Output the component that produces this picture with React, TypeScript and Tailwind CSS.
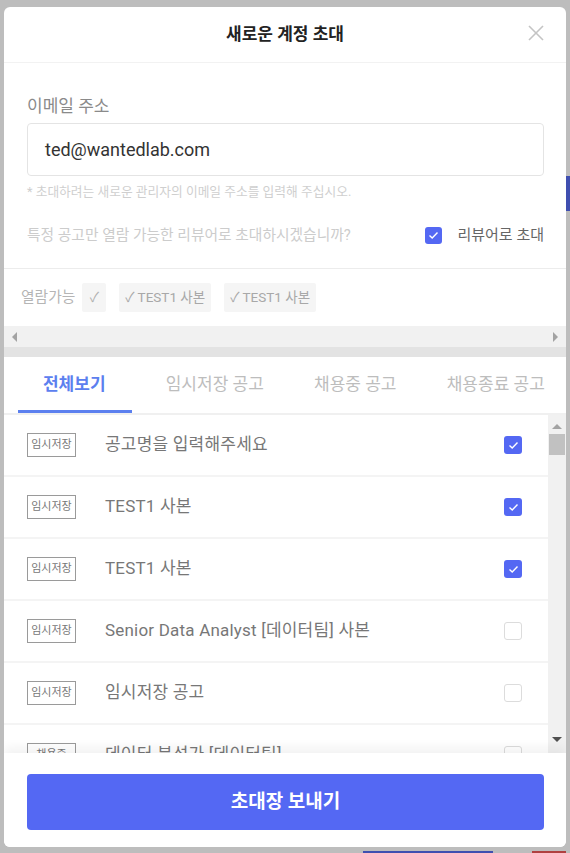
import React from "react";

const rows = [
  { badge: "임시저장", title: "공고명을 입력해주세요", checked: true },
  { badge: "임시저장", title: "TEST1 사본", checked: true },
  { badge: "임시저장", title: "TEST1 사본", checked: true },
  { badge: "임시저장", title: "Senior Data Analyst [데이터팀] 사본", checked: false },
  { badge: "임시저장", title: "임시저장 공고", checked: false },
  { badge: "채용중", title: "데이터 분석가 [데이터팀]", checked: false },
  { badge: "채용중", title: "TEST1", checked: false },
];

const tabs = ["전체보기", "임시저장 공고", "채용중 공고", "채용종료 공고"];

function CheckBox({ checked, size = "w-[18px] h-[18px]" }: { checked: boolean; size?: string }) {
  if (checked) {
    return (
      <span className={`${size} shrink-0 rounded-[3px] bg-[#5468f3] flex items-center justify-center`}>
        <svg width="11" height="9" viewBox="0 0 11 9" fill="none">
          <polyline points="1.5,4.5 4.2,7 9.5,1.5" stroke="white" strokeWidth="1.4" />
        </svg>
      </span>
    );
  }
  return <span className={`${size} shrink-0 rounded-[3px] border border-[#dcdcdc] bg-white`} />;
}

function Triangle({ dir, color }: { dir: "up" | "down" | "left" | "right"; color: string }) {
  const pts = {
    up: "0,6 5,1 10,6",
    down: "0,1 5,6 10,1",
    left: "6,0 1,5 6,10",
    right: "1,0 6,5 1,10",
  }[dir];
  const w = dir === "up" || dir === "down" ? 10 : 7;
  const h = dir === "up" || dir === "down" ? 7 : 10;
  return (
    <svg width={w} height={h} viewBox={`0 0 ${w} ${h}`}>
      <polygon points={pts} fill={color} />
    </svg>
  );
}

export default function App() {
  return (
    <div className="relative w-[570px] h-[853px] overflow-hidden bg-[#bdbdbd] pt-[7px] font-['Roboto','Noto_Sans_CJK_KR',sans-serif]">
      {/* page remnants behind the dimmed backdrop */}
      <div className="absolute right-0 top-[176px] w-[4px] h-[35px] bg-[#3f4fb0]" />
      <div className="absolute left-[363px] bottom-0 w-[130px] h-[2px] bg-[#3f4fb0]" />
      <div className="absolute left-[532px] bottom-0 w-[34px] h-[2px] bg-[#b04040]" />

      <div className="relative ml-[4px] w-[562px] h-[840px] bg-white rounded-[6px] overflow-hidden flex flex-col">
        {/* header */}
        <div className="relative h-[56px] shrink-0 flex items-center justify-center border-b border-[#f2f2f2]">
          <h2 className="text-[17px] font-bold text-[#222]">새로운 계정 초대</h2>
          <button className="absolute right-[22px] top-[18px] w-[16px] h-[16px]">
            <svg width="16" height="16" viewBox="0 0 16 16">
              <line x1="1" y1="1" x2="15" y2="15" stroke="#c4c4c4" strokeWidth="1.6" />
              <line x1="15" y1="1" x2="1" y2="15" stroke="#c4c4c4" strokeWidth="1.6" />
            </svg>
          </button>
        </div>

        {/* form */}
        <div className="shrink-0 pl-[23px] pr-[22px] pt-[33px] pb-[23px] border-b border-[#ececec]">
          <label className="block text-[17px] leading-[20px] text-[#8a8a8a]">이메일 주소</label>
          <div className="mt-[7px] h-[53px] rounded-[4px] border border-[#e4e4e4] flex items-center px-[17px]">
            <span className="text-[18px] text-[#333]">ted@wantedlab.com</span>
          </div>
          <p className="mt-[8px] text-[12.75px] leading-[16px] text-[#cfcfcf]">
            * 초대하려는 새로운 관리자의 이메일 주소를 입력해 주십시오.
          </p>
          <div className="mt-[25px] h-[20px] flex items-center justify-between">
            <span className="text-[14.75px] text-[#cccccc]">특정 공고만 열람 가능한 리뷰어로 초대하시겠습니까?</span>
            <div className="flex items-center gap-[15px]">
              <CheckBox checked size="w-[17px] h-[17px]" />
              <span className="text-[15px] text-[#666]">리뷰어로 초대</span>
            </div>
          </div>
        </div>

        {/* readable chips */}
        <div className="shrink-0 h-[57px] pl-[17px] flex items-center">
          <span className="text-[14.75px] text-[#b5b5b5] mr-[7px]">열람가능</span>
          <div className="flex items-center gap-[13px]">
            <span className="h-[29px] w-[24px] bg-[#f5f5f5] rounded-[2px] flex items-center justify-center text-[13.5px] text-[#b0b0b0]">
              ✓
            </span>
            <span className="h-[29px] px-[6px] bg-[#f5f5f5] rounded-[2px] flex items-center text-[13.5px] text-[#a8a8a8]">
              ✓ TEST1 사본
            </span>
            <span className="h-[29px] px-[6px] bg-[#f5f5f5] rounded-[2px] flex items-center text-[13.5px] text-[#a8a8a8]">
              ✓ TEST1 사본
            </span>
          </div>
        </div>

        {/* horizontal scrollbar */}
        <div className="shrink-0 h-[21px] bg-[#f1f1f1] flex items-center justify-between px-[7px]">
          <Triangle dir="left" color="#a3a3a3" />
          <Triangle dir="right" color="#a3a3a3" />
        </div>
        <div className="shrink-0 h-[10px] bg-[#e3e3e3]" />

        {/* tabs */}
        <div className="shrink-0 grid grid-cols-4 border-b-2 border-[#f0f0f0]">
          {tabs.map((t, i) => (
            <div key={t} className="relative h-[56px] flex items-center justify-center">
              <span
                className={
                  i === 0
                    ? "text-[17px] font-bold text-[#5c80ef]"
                    : "text-[17px] text-[#bdbdbd] whitespace-nowrap"
                }
              >
                {t}
              </span>
              {i === 0 && <div className="absolute left-[14px] right-[13px] bottom-0 h-[3px] bg-[#5c80ef]" />}
            </div>
          ))}
        </div>

        {/* list */}
        <div className="flex-1 min-h-0 flex">
          <div className="flex-1 overflow-hidden">
            {rows.map((r, i) => (
              <div key={i} className="h-[62px] border-b-2 border-[#f4f4f4] flex items-center pl-[23px] pr-[26px]">
                <span className="w-[49px] h-[24px] border border-[#9a9a9a] flex items-center justify-center text-[11px] text-[#777] shrink-0">
                  {r.badge}
                </span>
                <span className="ml-[29px] flex-1 text-[17px] tracking-[0.2px] text-[#777] whitespace-nowrap">
                  {r.title}
                </span>
                <CheckBox checked={r.checked} />
              </div>
            ))}
          </div>
          <div className="w-[18px] shrink-0 bg-[#f1f1f1] flex flex-col items-center pt-[8px] pb-[10px]">
            <Triangle dir="up" color="#a3a3a3" />
            <div className="mt-[4px] w-[16px] h-[21px] bg-[#c1c1c1]" />
            <div className="flex-1" />
            <Triangle dir="down" color="#505050" />
          </div>
        </div>

        {/* footer */}
        <div className="relative z-10 shrink-0 h-[94px] bg-white shadow-[0_-6px_10px_rgba(0,0,0,0.05)] pl-[23px] pr-[22px] pt-[21px]">
          <button className="w-full h-[56px] rounded-[4px] bg-[#5468f3] text-white text-[19px] font-bold">
            초대장 보내기
          </button>
        </div>
      </div>
    </div>
  );
}
